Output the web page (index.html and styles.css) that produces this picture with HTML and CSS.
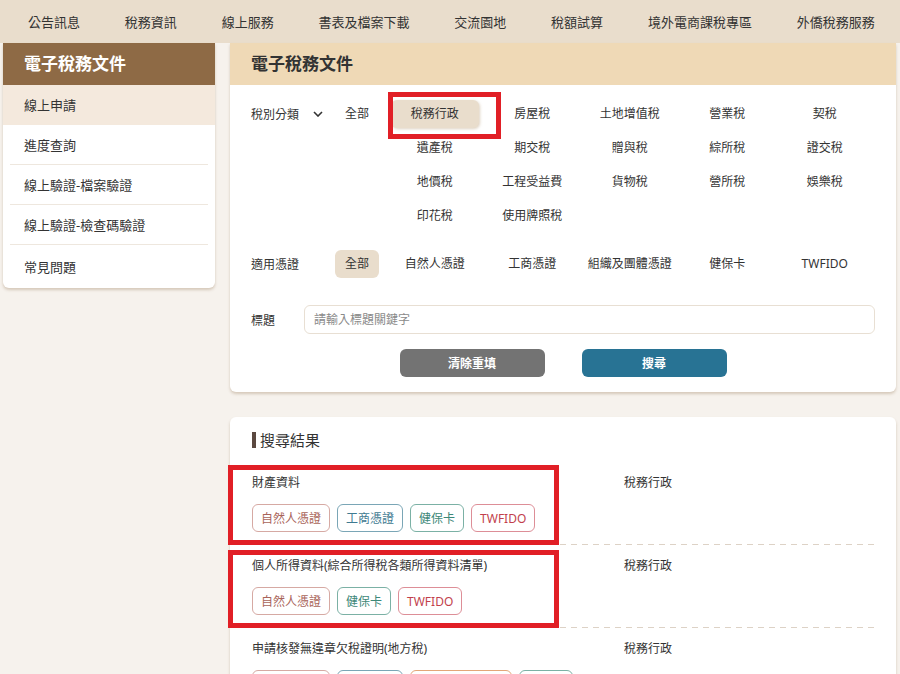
FILE: index.html
```html
<!DOCTYPE html>
<html lang="zh-Hant">
<head>
<meta charset="utf-8">
<title>電子稅務文件</title>
<link rel="stylesheet" href="styles.css">
</head>
<body>
<nav class="topnav">
  <a>公告訊息</a><a>稅務資訊</a><a>線上服務</a><a>書表及檔案下載</a><a>交流園地</a><a>稅額試算</a><a>境外電商課稅專區</a><a>外僑稅務服務</a>
</nav>
<div class="layout">
  <aside class="sidebar">
    <div class="side-head">電子稅務文件</div>
    <ul class="side-menu">
      <li class="active">線上申請</li>
      <li>進度查詢</li>
      <li>線上驗證-檔案驗證</li>
      <li>線上驗證-檢查碼驗證</li>
      <li>常見問題</li>
    </ul>
  </aside>
  <main class="main">
    <section class="panel filter">
      <div class="panel-head">電子稅務文件</div>
      <div class="filter-body">
        <div class="frow">
          <div class="flabel">稅別分類<svg class="chev" width="10" height="6" viewBox="0 0 10 6"><polyline points="1,1 5,5 9,1" fill="none" stroke="#333" stroke-width="1.6"/></svg></div>
          <div class="fall"><span class="opt">全部</span></div>
          <div class="fgrid">
            <span class="opt sel">稅務行政</span><span class="opt">房屋稅</span><span class="opt">土地增值稅</span><span class="opt">營業稅</span><span class="opt">契稅</span>
            <span class="opt">遺產稅</span><span class="opt">期交稅</span><span class="opt">贈與稅</span><span class="opt">綜所稅</span><span class="opt">證交稅</span>
            <span class="opt">地價稅</span><span class="opt">工程受益費</span><span class="opt">貨物稅</span><span class="opt">營所稅</span><span class="opt">娛樂稅</span>
            <span class="opt">印花稅</span><span class="opt">使用牌照稅</span>
          </div>
        </div>
        <div class="frow cert">
          <div class="flabel">適用憑證</div>
          <div class="fall"><span class="opt sel-all">全部</span></div>
          <div class="fgrid">
            <span class="opt">自然人憑證</span><span class="opt">工商憑證</span><span class="opt">組織及團體憑證</span><span class="opt">健保卡</span><span class="opt">TWFIDO</span>
          </div>
        </div>
        <div class="frow title-row">
          <div class="tlabel">標題</div>
          <div class="tinput">請輸入標題關鍵字</div>
        </div>
        <div class="btns">
          <button class="btn btn-clear">清除重填</button>
          <button class="btn btn-search">搜尋</button>
        </div>
      </div>
    </section>
    <section class="panel results">
      <h2 class="res-head">搜尋結果</h2>
      <div class="item">
        <div class="item-main">
          <div class="item-title">財產資料</div>
          <div class="tags">
            <span class="tag t-nat">自然人憑證</span><span class="tag t-biz">工商憑證</span><span class="tag t-nhi">健保卡</span><span class="tag t-fido">TWFIDO</span>
          </div>
        </div>
        <div class="item-cat">稅務行政</div>
      </div>
      <div class="item">
        <div class="item-main">
          <div class="item-title">個人所得資料(綜合所得稅各類所得資料清單)</div>
          <div class="tags">
            <span class="tag t-nat">自然人憑證</span><span class="tag t-nhi">健保卡</span><span class="tag t-fido">TWFIDO</span>
          </div>
        </div>
        <div class="item-cat">稅務行政</div>
      </div>
      <div class="item">
        <div class="item-main">
          <div class="item-title">申請核發無違章欠稅證明(地方稅)</div>
          <div class="tags">
            <span class="tag t-nat">自然人憑證</span><span class="tag t-biz">工商憑證</span><span class="tag t-org">組織及團體憑證</span><span class="tag t-nhi">健保卡</span>
          </div>
        </div>
        <div class="item-cat">稅務行政</div>
      </div>
    </section>
  </main>
</div>
<div class="mark mark1"></div>
<div class="mark mark2"></div>
<div class="mark mark3"></div>
</body>
</html>
```

FILE: styles.css
```css
* { box-sizing: border-box; }
html, body { margin: 0; padding: 0; }
body {
  background: #f6f2ed;
  font-family: "Noto Sans", "Noto Sans CJK TC", sans-serif;
  color: #333;
  height: 674px;
  overflow: hidden;
  position: relative;
}
.topnav {
  height: 43px;
  background: #e9ddcc;
  display: flex;
  align-items: center;
  gap: 44.8px;
  padding: 2px 0 0 28px;
  font-size: 13px;
  line-height: 41px;
  white-space: nowrap;
  overflow: hidden;
}
.topnav a { color: #333; }

.layout {
  display: flex;
  align-items: flex-start;
  gap: 15px;
  padding-left: 3px;
}
.sidebar {
  width: 212px;
  flex-shrink: 0;
  background: #fff;
  border-radius: 0 0 6px 6px;
  box-shadow: 0 2px 3px rgba(130, 95, 55, 0.28);
  overflow: hidden;
}
.side-head {
  height: 42px;
  line-height: 42px;
  background: #8e6a45;
  color: #fff;
  font-size: 17px;
  font-weight: 700;
  padding-left: 21px;
}
.side-menu { list-style: none; margin: 0; padding: 0; }
.side-menu li {
  height: 40px;
  line-height: 40px;
  margin: 0 7px;
  padding-left: 14px;
  font-size: 13px;
  border-bottom: 1px solid #eee7de;
}
.side-menu li.active {
  margin: 0;
  padding-left: 21px;
  line-height: 41px;
  background: #f4e9dd;
  border-bottom: none;
}
.side-menu li:last-child {
  border-bottom: none;
  height: 43px;
  line-height: 44px;
}

.main {
  width: 666px;
  flex-shrink: 0;
  display: flex;
  flex-direction: column;
  gap: 25px;
}
.panel {
  background: #fff;
  border-radius: 6px;
  box-shadow: 0 2px 3px rgba(130, 95, 55, 0.28);
  overflow: hidden;
}
.filter { border-radius: 0 0 6px 6px; }
.panel-head {
  height: 42px;
  line-height: 42px;
  background: #efd9b6;
  font-size: 17px;
  font-weight: 700;
  padding-left: 21px;
  color: #333;
}
.filter-body { padding: 15px 21px 15px 21px; }
.frow { display: flex; align-items: flex-start; }
.frow.cert { margin-top: 20px; }
.flabel {
  width: 84px;
  flex-shrink: 0;
  height: 28px;
  display: flex;
  align-items: center;
  font-size: 12px;
}
.chev { margin-left: 14px; }
.fall { width: 51px; flex-shrink: 0; }
.opt {
  height: 28px;
  display: inline-flex;
  align-items: center;
  justify-content: center;
  font-size: 12px;
  line-height: 28px;
  border-radius: 6px;
  white-space: nowrap;
}
.fall .opt { padding: 0 10px; }
.sel-all { background: #e9ddcc; }
.fgrid {
  display: grid;
  grid-template-columns: repeat(5, 97.5px);
  row-gap: 6px;
}
.fgrid .opt { width: 88px; justify-self: center; }
.opt.sel {
  background: #e9ddcc;
  box-shadow: 1px 1px 3px rgba(160, 125, 80, 0.35);
}
.title-row {
  margin-top: 27px;
  align-items: center;
}
.tlabel { width: 53px; flex-shrink: 0; font-size: 12px; }
.tinput {
  flex: 1;
  height: 29px;
  border: 1px solid #e8dfd3;
  border-radius: 6px;
  padding-left: 9px;
  font-size: 12px;
  line-height: 27px;
  color: #8a8a8a;
}
.btns {
  margin-top: 15px;
  display: flex;
  justify-content: center;
  gap: 37px;
}
.btn {
  width: 145px;
  height: 28px;
  border: none;
  border-radius: 6px;
  color: #fff;
  font-family: inherit;
  font-size: 12px;
  font-weight: 700;
  padding: 0;
}
.btn-clear { background: #737373; }
.btn-search { background: #287394; }

.results { padding: 13px 21px 0 22px; height: 300px; }
.res-head {
  margin: 0;
  display: flex;
  align-items: center;
  font-size: 15px;
  font-weight: 400;
  line-height: 20px;
}
.res-head::before {
  content: "";
  width: 4px;
  height: 16px;
  background: #5b4940;
  margin-right: 4px;
}
.res-head + .item { margin-top: 12px; }
.item {
  display: grid;
  grid-template-columns: 372px 1fr;
  padding: 10px 0 13px;
  background: repeating-linear-gradient(to right, #ddd2c6 0 6px, transparent 6px 11px) left bottom / 100% 1px no-repeat;
}
.item-title, .item-cat { font-size: 12px; line-height: 19px; padding-top: 1px; }
.item-title { height: 18px; }
.tags { margin-top: 14px; display: flex; gap: 7px; }
.tag {
  height: 28px;
  display: inline-flex;
  align-items: center;
  padding: 0 8px;
  border: 1px solid;
  border-radius: 6px;
  font-size: 12px;
  white-space: nowrap;
}
.t-nat { color: #a9645a; border-color: #d6a9a3; }
.t-biz { color: #3f7a91; border-color: #7aa6b6; }
.t-org { color: #c0703a; border-color: #e3a678; }
.t-nhi { color: #3d8878; border-color: #7bb1a5; }
.t-fido { color: #c23f4c; border-color: #dd8e97; }

.mark {
  position: absolute;
  border: 5px solid #e11f26;
  pointer-events: none;
}
.mark1 { left: 388px; top: 92px; width: 113px; height: 47px; }
.mark2 { left: 228px; top: 465px; width: 331px; height: 80px; }
.mark3 { left: 228px; top: 550px; width: 331px; height: 78px; }
```
